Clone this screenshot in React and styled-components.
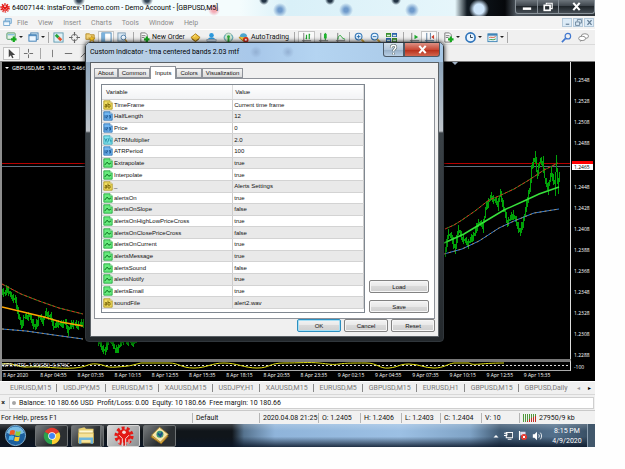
import React from "react";
import styled, { createGlobalStyle, css } from "styled-components";

const ui = 'Roboto, "Open Sans", sans-serif';
const classic = '"Liberation Sans", Arial, sans-serif';

const Global = createGlobalStyle`
  * { box-sizing: border-box; }
  html, body { margin: 0; background: #fefefe; }
  body { font: 7px/10px ${ui}; color: #111; }
  button { font: inherit; color: inherit; margin: 0; padding: 0; border: 0; background: none; }
  svg { display: block; flex: none; }
`;

const Page = styled.div`
  padding-right: 30px;
`;
const Desktop = styled.main`
  position: relative;
  background: #f0f0f0;
  overflow: hidden;
`;

/* ---------- title bar ---------- */
const TitleBar = styled.header`
  display: flex;
  align-items: center;
  gap: 2px;
  height: 16px;
  background:
    radial-gradient(circle at 79px 0, #345 0 2px, transparent 6px),
    radial-gradient(circle at 147px 0, #345 0 2px, transparent 6px),
    radial-gradient(circle at 214px 10px, #f3a9b4 0 2px, transparent 6px),
    radial-gradient(circle at 280px 10px, #6f9acb 0 2px, transparent 7px),
    radial-gradient(circle at 346px 10px, #6f9acb 0 2px, transparent 7px),
    radial-gradient(circle at 412px 10px, #6f9acb 0 2px, transparent 7px),
    radial-gradient(circle at 264px 0, #234 0 2px, transparent 5px),
    radial-gradient(circle at 330px 0, #234 0 2px, transparent 5px),
    radial-gradient(circle at 396px 0, #234 0 2px, transparent 5px),
    radial-gradient(circle at 479px 9px, #cfe6fb 0 5px, transparent 10px),
    linear-gradient(90deg, #f4fcfd 0 240px, #d9f0f8 290px, #e6f6fb 455px, #111a22 467px, #06080b 505px, #4c555d 516px, #2e3439);
  white-space: nowrap;
`;
const TitleText = styled.h1`
  flex: 1;
  margin: 0;
  font-size: 7px;
  line-height: 12px;
  font-weight: 400;
  color: #000;
`;
const Controls = styled.div`
  display: flex;
  align-self: flex-start;
  border: 1px solid #8a939a;
  border-top: 0;
  border-radius: 0 0 3px 3px;
  background: linear-gradient(#6d757c, #3a4148 50%, #20262b 50%, #454d54);
`;
const ControlButton = styled.button`
  display: grid;
  place-items: center;
  width: ${(p) => (p.$wide ? 36 : 21)}px;
  height: 13px;
  & + & { border-left: 1px solid #848c93; }
`;

/* ---------- menu and toolbars ---------- */
const MenuBar = styled.nav`
  display: flex;
  align-items: center;
  height: 13px;
  padding: 0 1px 0 3px;
  background: #f3f3f3;
`;
const MenuItem = styled.button`
  padding: 0 5px;
  color: #8b8b8b;
`;
const MdiButtons = styled.div`
  display: flex;
  gap: 1px;
  margin-left: auto;
`;
const MdiButton = styled.button`
  display: grid;
  place-items: center;
  width: 10px;
  height: 9px;
  border: 1px solid #b4c9da;
  background: #dcebf7;
`;
const Toolbar = styled.div`
  display: flex;
  align-items: center;
  height: ${(p) => (p.$last ? 17 : 15)}px;
  padding: 0 3px;
  border-top: 1px solid ${(p) => (p.$last ? "#dadada" : "#fff")};
  background: #f0f0f0;
`;
const Tool = styled.button`
  display: flex;
  align-items: center;
  justify-content: center;
  gap: 2px;
  flex: none;
  height: 13px;
  width: ${(p) => p.$w || 17}px;
  color: #111;
  white-space: nowrap;
  ${(p) => p.$pressed && css`background: #fafafa; border: 1px solid #c4c4c4;`}
`;
const Sep = styled.i`
  flex: none;
  width: 1px;
  height: 11px;
  margin: 0 ${(p) => (p.$tight ? 1 : 3)}px;
  background: #a8a8a8;
`;
const Caret = styled.i`
  border: 2px solid transparent;
  border-top-color: #222;
  border-bottom: 0;
`;
const Spacer = styled.span`
  flex: 1;
`;

/* ---------- chart ---------- */
const ChartWindow = styled.section`
  display: grid;
  grid-template-columns: minmax(0, 1fr) 24px;
  border-top: 1px solid #777;
  border-left: 2px solid #8e8e8e;
  background: #000;
  color: #fff;
  font: 5px/7px "Open Sans", sans-serif;
`;
const Plot = styled.div`
  display: grid;
  border-right: 1px solid #ddd;
`;
const PlotHead = styled.div`
  grid-area: 1 / 1;
  display: flex;
  align-items: center;
  align-self: start;
  gap: 3px;
  padding: 2px 3px;
  font-family: ${ui};
  font-size: 6px;
  white-space: pre;
  ${Caret} { border-top-color: #fff; }
`;
const Drawing = styled.svg`
  grid-area: 1 / 1;
  width: 100%;
  height: ${(p) => p.$h}px;
`;
const PriceAxis = styled.ol`
  display: flex;
  flex-direction: column;
  justify-content: space-between;
  margin: 0;
  padding: 15px 0 0;
  list-style: none;
`;
const Price = styled.li`
  padding-left: 3px;
  ${(p) => p.$live && css`
    margin-right: 2px;
    margin-left: 1px;
    padding-left: 2px;
    border-top: 3px solid #f00;
    line-height: 6px;
    background: #fff;
    color: #000;
  `}
`;
const SubPlot = styled(Plot)`
  border-top: 3px solid #777;
  border-bottom: 1px solid #aaa;
`;
const SubLabel = styled.span`
  grid-area: 1 / 1;
  white-space: nowrap;
`;
const SubAxis = styled.div`
  align-self: end;
  padding-left: 3px;
`;
const Times = styled.ol`
  grid-column: 1 / -1;
  display: grid;
  grid-template-columns: repeat(15, minmax(0, 1fr));
  height: 10px;
  margin: 0;
  padding: 0 34px 0 1px;
  list-style: none;
  white-space: nowrap;
`;
const Time = styled.li`
  line-height: 8px;
`;

/* ---------- bars below the chart ---------- */
const ChartTabs = styled.nav`
  display: flex;
  align-items: center;
  height: 13px;
  padding-left: 4px;
  border-top: 1px solid #fff;
  background: #f0f0f0;
`;
const ChartTab = styled.button`
  padding: 0 5px 0 6px;
  line-height: 8px;
  color: #777;
  border-right: 1px solid ${(p) => (p.$last ? "transparent" : "#888")};
`;
const TabScroll = styled.button`
  width: 11px;
  font-size: 6px;
  color: ${(p) => (p.$dim ? "#999" : "#000")};
`;
const Terminal = styled.div`
  display: flex;
  align-items: center;
  gap: 3px;
  height: 16px;
  border-top: 1px solid #d8d8d8;
`;
const TerminalClose = styled.button`
  width: 6px;
  font-weight: 700;
`;
const Balance = styled.div`
  display: flex;
  align-items: center;
  gap: 3px;
  flex: 1;
  height: 12px;
  margin-right: 1px;
  padding-left: 2px;
  border: 1px solid #cfcfcf;
  background: #fff;
  white-space: pre;
`;
const Dot = styled.i`
  width: 4px;
  height: 4px;
  border-radius: 50%;
  background: #a5a5a5;
`;
const StatusBar = styled.footer`
  display: grid;
  grid-template-columns: minmax(0, 192fr) 67fr 59fr 42fr 41fr 39fr 41fr 38fr 76fr;
  align-items: center;
  height: 14px;
  border-top: 1px solid #c9c9c9;
  background: #f1f1f1;
  white-space: nowrap;
`;
const Status = styled.span`
  display: flex;
  align-items: center;
  gap: 2px;
  padding-left: ${(p) => (p.$first ? 1 : 3)}px;
  border-left: ${(p) => (p.$first ? 0 : 1)}px solid #b5b5b5;
`;

/* ---------- taskbar ---------- */
const TaskBar = styled.footer`
  display: flex;
  align-items: center;
  height: 23px;
  padding-left: 4px;
  background:
    linear-gradient(rgba(255, 255, 255, 0.2), transparent 30%, transparent 55%, rgba(10, 22, 40, 0.85)),
    linear-gradient(90deg, #10151a 0 232px, #56738f 244px, #8fb4da 275px, #9cc0e4 400px, #7fa3c6 470px, #3f5972 500px, #53708c 555px, #33485c);
`;
const TaskButton = styled.button`
  display: grid;
  place-items: center;
  width: 33px;
  height: 22px;
  margin-left: 3px;
  border: 1px solid ${(p) => (p.$active ? "#d5d5d5" : "#6d7173")};
  ${(p) => p.$stacked && css`border-right: 4px double #6d7173;`}
  border-radius: 2px;
  background: ${(p) => (p.$active ? "linear-gradient(135deg, #d8d8d8, #8c8f91)" : "linear-gradient(135deg, #777b7d, #2b2f32 60%)")};
`;
const StartButton = styled.button`
  margin-right: 5px;
`;
const Tray = styled.div`
  display: flex;
  align-items: center;
  gap: 5px;
  margin-left: auto;
  color: #fff;
`;
const Clock = styled.time`
  width: 40px;
  text-align: center;
  line-height: 10px;
`;
const ShowDesktop = styled.button`
  width: 8px;
  height: 23px;
  border-left: 1px solid #8da0b1;
  background: #41576b;
`;

/* ---------- dialog ---------- */
const Dialog = styled.section`
  position: absolute;
  top: 42px;
  left: 85px;
  width: 359px;
  padding: 0 4px 4px;
  border: 1px solid #30363b;
  border-radius: 5px 5px 4px 4px;
  background: linear-gradient(#b9cee5, #8ea5bb 20px, #c0c5ca 88px, #3b4247 90px, #23282c);
  box-shadow: 0 0 5px #000;
`;
const DialogBar = styled.header`
  display: flex;
  align-items: flex-start;
  height: 19px;
  margin: 0 -4px;
  border-radius: 4px 4px 0 0;
  background:
    radial-gradient(circle at 170px 9px, #93b0d3, transparent 6px),
    radial-gradient(circle at 202px 9px, #93b0d3, transparent 6px),
    linear-gradient(90deg, #bdd0e2, #a8c8ea 170px, #b4d4f1 230px, #a7c7e5);
`;
const DialogTitle = styled.h2`
  flex: 1;
  margin: 0;
  padding-left: 4px;
  font-size: 7px;
  font-weight: 400;
  line-height: 19px;
  color: #000;
`;
const DialogControl = styled.button`
  display: grid;
  place-items: center;
  width: ${(p) => (p.$close ? 36 : 21)}px;
  height: 14px;
  margin-right: ${(p) => (p.$close ? 3 : 0)}px;
  border: 1px solid #4c5a68;
  border-top: 0;
  border-radius: ${(p) => (p.$close ? "0 0 3px 0" : "0 0 0 3px")};
  background: ${(p) => (p.$close ? "linear-gradient(#dd9184, #c84a37 50%, #b52a16 50%, #d2664f)" : "linear-gradient(#d3e0eb, #b3c6d9 50%, #94acc4 50%, #b9d0e5)")};
`;
const Client = styled.div`
  padding: 3px 3px 4px;
  border: 1px solid #5b6166;
  background: #f0f0f0;
  font-family: ${classic};
  font-size: 6px;
  line-height: 8px;
`;
const Tabs = styled.div`
  display: flex;
  align-items: flex-end;
  height: 12px;
`;
const Tab = styled.button`
  height: ${(p) => (p.$on ? 13 : 10)}px;
  margin-bottom: ${(p) => (p.$on ? -1 : 0)}px;
  padding: 0 ${(p) => (p.$on ? 4 : 3)}px;
  border: 1px solid #8e9299;
  border-bottom-width: ${(p) => (p.$on ? 0 : 1)}px;
  background: ${(p) => (p.$on ? "#fff" : "linear-gradient(#f4f4f4, #dcdcdc)")};
  & + & { border-left-width: ${(p) => (p.$on ? 1 : 0)}px; }
`;
const Sheet = styled.div`
  display: flex;
  align-items: flex-end;
  gap: 4px;
  padding: 5px 5px 5px 6px;
  border: 1px solid #8e9299;
  background: #fff;
`;
const TableFrame = styled.div`
  flex: 1;
  height: 229px;
  border: 1px solid #7f8790;
`;
const Grid = styled.table`
  width: 100%;
  height: 224px;
  border-collapse: collapse;
  table-layout: fixed;
  text-align: left;
`;
const HeadCell = styled.th`
  height: 14px;
  padding: 0 ${(p) => (p.$value ? 2 : 4)}px;
  border-right: 1px solid #dcdcdc;
  border-bottom: 1px solid #d2d2d2;
  font-weight: 400;
  background: linear-gradient(#fff, #f2f3f5);
`;
const Row = styled.tr`
  background: ${(p) => (p.$odd ? "#e9e9e9" : "#fff")};
`;
const Cell = styled.td`
  padding: 0 1px;
  border-right: 1px solid #cdcdcd;
  border-bottom: 1px solid #d3d3d3;
  line-height: 8px;
`;
const NameBox = styled.span`
  display: flex;
  align-items: center;
  gap: 1px;
`;
const SideButtons = styled.div`
  display: grid;
  gap: 7px;
`;
const Push = styled.button`
  width: ${(p) => (p.$wide ? 60 : 44)}px;
  height: 13px;
  border: 1px solid ${(p) => (p.$default ? "#2c8fc0" : "#828282")};
  border-radius: 2px;
  box-shadow: inset 0 0 0 1px ${(p) => (p.$default ? "#a5dff5" : "#f6f6f6")};
  background: linear-gradient(#f3f3f3, #e8e8e8 50%, #d9d9d9 50%, #cfcfcf);
  line-height: 10px;
`;
const Actions = styled.div`
  display: flex;
  justify-content: flex-end;
  gap: 3px;
`;

/* ---------- drawings ---------- */
const Icon = ({ size = 11, children }) => (
  <svg width={size} height={size} viewBox="0 0 12 12" fill="none" aria-hidden="true">{children}</svg>
);
const Plus = () => <path d="M8.500 5v6M5.500 8h6" stroke="#16a81e" strokeWidth="2.400" />;
const icons = {
  chartAdd: <><rect x="1" y="1" width="9" height="7" rx="1" fill="#e7f2e8" stroke="#4b9560" /><path d="M2 3h7" stroke="#5aa6d8" /><Plus /></>,
  windows: <><rect x="3" y="1" width="8" height="7" fill="#d4e8f7" stroke="#4c82ae" /><rect x="1" y="3" width="8" height="7" fill="#ecf6ff" stroke="#397bb4" /><path d="M1 4h8" stroke="#397bb4" /></>,
  market: <><rect x="1" y="1" width="10" height="10" fill="#dff0f5" stroke="#5d9ab0" /><path d="M3 3l3 3" stroke="#25a63a" strokeWidth="3" /><path d="M6 6l3 3" stroke="#e2532c" strokeWidth="3" /></>,
  target: <><circle cx="6" cy="6" r="3.500" stroke="#777" /><path d="M6 0v4M6 8v4M0 6h4M8 6h4" stroke="#666" strokeWidth="1.300" /></>,
  star: <><path d="M1 2h4l1 1h4v5H1z" fill="#f1d27b" stroke="#b58b28" /><path d="M7.500 4l1 2.500h2.500l-2 1.600.8 2.700-2.300-1.600L5.200 10.800 6 8.100 4 6.500h2.500z" fill="#ffcc28" stroke="#bb8914" strokeWidth=".6" /></>,
  panel: <><rect x="1" y="1" width="10" height="10" fill="#fff" stroke="#3f82b7" /><rect x="1" y="1" width="3.500" height="10" fill="#7cb2dd" /></>,
  tester: <><rect x="1" y="1" width="8" height="9" fill="#d9e8f4" stroke="#7f9cb4" /><circle cx="7" cy="6" r="2.600" fill="#eef7ff" stroke="#4c7ba5" /><path d="M9 8l2 3" stroke="#c2912d" strokeWidth="1.500" /></>,
  order: <><path d="M2 1h5l2 2v8H2z" fill="#f8f8f8" stroke="#777" /><path d="M3 4h4M3 6h3" stroke="#777" /><Plus /></>,
  editor: <><path d="M1 6l5-4 5 4-5 4z" fill="#f2c53e" stroke="#a97712" /><path d="M2 7.500l4 3 4-3" stroke="#8c6212" /><path d="M4 5l2-1.500" stroke="#fff3b4" /></>,
  person: <><circle cx="6" cy="3.500" r="2.500" fill="#2d99dc" /><path d="M2 8c1-3 7-3 8 0z" fill="#2d99dc" /><rect x="1" y="8" width="10" height="2.500" fill="#d5e0ea" stroke="#71899f" strokeWidth=".6" /></>,
  signal: <><circle cx="6" cy="6" r="4.800" fill="#d1e6d1" stroke="#8db2a6" /><path d="M3 3c-2 2-2 4 0 6M9 3c2 2 2 4 0 6" stroke="#57a7c5" /><path d="M6 5v6" stroke="#2ca538" strokeWidth="2" /><circle cx="6" cy="5" r="1.500" fill="#2ca538" /></>,
  robot: <><path d="M1 6l5 4 4-4-4-2z" fill="#f4c738" stroke="#b98912" /><path d="M2 5c0-5 8-5 8 0-2 1-6 1-8 0z" fill="#4ea6cf" /><circle cx="8.500" cy="8.500" r="3" fill="#dc2e1e" /><rect x="7.500" y="7.500" width="2" height="2" fill="#fff" /></>,
  bars: <><path d="M3 1v10M1 9.500h10" stroke="#777" /><path d="M6 3v5M6 7h-1M9 2v6M9 3h1" stroke="#19a52a" strokeWidth="1.300" /></>,
  candles: <><path d="M3 1v10M1 9.500h10" stroke="#777" /><path d="M8 1v8" stroke="#148d22" /><rect x="6.500" y="2" width="3" height="5" fill="#1db32d" /></>,
  line: <><path d="M3 1v10M1 9.500h10" stroke="#777" /><path d="M3 8c1-5 3-5 4-3s2 2 4 3" stroke="#1da52d" /></>,
  zoomIn: <><circle cx="5" cy="5" r="3.700" fill="#e6f4ff" stroke="#3778b7" strokeWidth="1.200" /><path d="M3 5h4M5 3v4" stroke="#2870b2" /><path d="M8 8l3 3" stroke="#caa032" strokeWidth="2" /></>,
  zoomOut: <><circle cx="5" cy="5" r="3.700" fill="#e6f4ff" stroke="#3778b7" strokeWidth="1.200" /><path d="M3 5h4" stroke="#2870b2" /><path d="M8 8l3 3" stroke="#caa032" strokeWidth="2" /></>,
  tiles: <><path d="M0 1h5.500v4.500H0zM6.500 6.500H12V11H6.500z" fill="#3a8f2e" /><path d="M6.500 1H12v4.500H6.500zM0 6.500h5.500V11H0z" fill="#2a63ad" /><path d="M1 3h3.500v1.500H1zM7.500 3H11v1.500H7.500zM1 8.500h3.500V10H1zM7.500 8.500H11V10H7.500z" fill="#dcefe0" /></>,
  scroll: <><path d="M3 1v10M1 9.500h10" stroke="#777" /><path d="M6 3l4 2.500L6 8z" fill="#1cab2c" /></>,
  shift: <><path d="M3 1v10M1 9.500h10M7 1v7" stroke="#55799c" /><path d="M11 3v5L8 5.500z" fill="#d2402a" /></>,
  clock: <><circle cx="6" cy="6" r="5" fill="#eaf5ff" stroke="#2f74ba" strokeWidth="1.800" /><path d="M6 3v3h2.500" stroke="#234" /></>,
  template: <><rect x="1" y="2" width="10" height="8.500" fill="#e9f4fb" stroke="#3f84b6" /><path d="M1 3h10" stroke="#3f84b6" strokeWidth="2" /><path d="M2.500 6c2-1 4 1 7-1" stroke="#d4522e" /><path d="M2.500 8.500c2-1 4 1 7-1" stroke="#2b9b3a" /></>,
  search: <><circle cx="7.500" cy="4.500" r="3" stroke="#4077cf" strokeWidth="1.300" /><path d="M5 7l-4 4" stroke="#4077cf" strokeWidth="1.800" /></>,
  chat: <><ellipse cx="7.500" cy="4.500" rx="4" ry="2.600" fill="#fff" stroke="#888" /><ellipse cx="4.500" cy="7" rx="3.800" ry="2.400" fill="#fff" stroke="#888" /><path d="M3 9l-1 2 3-2" fill="#888" /></>,
  cursor: <path d="M3 1v9l2.300-2 1.400 3.300 1.500-.7L6.900 7.500H10z" fill="#444" />,
  cross: <path d="M6 1v4M6 7v4M1 6h4M7 6h4" stroke="#666" />,
  vline: <path d="M6 2v8" stroke="#777" />,
  hline: <path d="M2 6h8" stroke="#666" />,
  trend: <path d="M2 10l8-8" stroke="#666" />,
  mdi: <><rect x="3" y="1" width="8" height="6" fill="#cfe5f6" stroke="#5c98c6" /><rect x="1" y="4" width="8" height="6" fill="#eef8ff" stroke="#5c98c6" /><path d="M1 5h8" stroke="#5c98c6" /></>,
};

const Gear = ({ size }) => (
  <svg width={size} height={size} viewBox="0 0 24 24" fill="none" aria-hidden="true">
    <circle cx="12" cy="12" r="8" fill="#e31a16" />
    <circle cx="12" cy="12" r="9" stroke="#e31a16" strokeWidth="5" strokeDasharray="3.300 2.350" />
    <path d="M10 24v-9L6 11M14 24v-9l4-4M6 21v-5M18 21v-5" stroke="#f3dcda" strokeWidth="1.200" />
    <circle cx="12" cy="7.500" r="2.200" fill="#f3dcda" />
  </svg>
);

const kinds = {
  text: { fill: "#f1de62", line: "#aa921c", mark: <path d="M2.500 5.500h2v3h-2v-1.500h2M6 3v5.500h2.500v-3H6" stroke="#6e5a00" /> },
  int: { fill: "#72b6f1", line: "#2c70ad", mark: <path d="M2.500 5v4M4 5.500h1.500v1.500H4v1.500h1.500M7 5.500h2v3H7M7 7h2" stroke="#164f8c" /> },
  real: { fill: "#80e3ee", line: "#36a3b5", mark: <path d="M2 4l1.500 3L5 4M3.500 7v2M7.500 3.500L5.500 9M8 6h1.500v3" stroke="#16829a" /> },
  bool: { fill: "#66ea7c", line: "#22a23c", mark: <path d="M2 8.500l3-3.500 2 2.500 2.500-1.500" stroke="#0b6f20" strokeWidth="1.200" /> },
};
const KindIcon = ({ kind }) => {
  const k = kinds[kind];
  return (
    <Icon size={10}>
      <path d="M1 1h7.500L11 3.500V11H1z" fill={k.fill} stroke={k.line} />
      <path d="M8.500 1v2.500H11" fill="#fff" stroke={k.line} strokeWidth=".7" />
      {k.mark}
    </Icon>
  );
};
const Cross = ({ size = 9, color = "#fff" }) => (
  <Icon size={size}><path d="M2.500 2l7 8M9.500 2l-7 8" stroke={color} strokeWidth="2.300" /></Icon>
);

const leftTrack = [[3,290],[6,293],[8,288],[12,296],[16,299],[19,312],[22,325],[25,317],[30,315],[33,321],[36,327],[40,317],[44,320],[47,312],[52,317],[55,326],[58,323],[62,324],[66,322],[69,330],[73,323],[78,325],[85,322]];
const lowerTrack = [[99,340],[102,346],[106,351],[109,340],[114,342],[116,350],[120,346],[123,339],[129,341],[135,342],[138,338]];
const rightTrack = [[446,252],[449,233],[453,238],[456,249],[459,229],[463,238],[466,240],[469,243],[473,237],[476,232],[479,222],[484,225],[487,206],[492,196],[496,200],[499,203],[501,193],[504,205],[508,222],[511,218],[514,214],[518,224],[521,232],[525,217],[528,200],[531,185],[533,164],[536,157],[538,173],[541,160],[544,163],[546,181],[549,187],[552,172],[556,184],[557,164],[559,185],[561,168]];
const barsFor = (track) => {
  let d = "";
  for (let i = 0; i < track.length - 1; i += 1) {
    const [x0, y0] = track[i];
    const [x1, y1] = track[i + 1];
    for (let x = x0; x < x1; x += 1) {
      const y = y0 + ((y1 - y0) * (x - x0)) / (x1 - x0);
      const slope = Math.abs(y1 - y0) / (x1 - x0) / 2;
      const up = slope + ((x * 7) % 5);
      const down = 1 + slope + ((x * 11) % 5);
      d += `M${x + 0.5} ${Math.round(y - up)}V${Math.round(y + down)}`;
    }
  }
  return d;
};

const Bands = () => (
  <Drawing $h={297} viewBox="3 62 568 297" preserveAspectRatio="none" fill="none" aria-label="GBPUSD price chart">
    <path d="M3 163.500H571" stroke="#b50000" />
    <path d="M3 166.500H571" stroke="#61707f" />
    <path d={barsFor(leftTrack) + barsFor(lowerTrack) + barsFor(rightTrack)} stroke="#00a208" />
    <g strokeWidth="1">
      <path d="M3 284L22 294 40 301 60 308 84 314M446 229L455 225 463 220 476 211 490 200 500 196 515 189 530 180 545 170 559 163" stroke="#1b8a1b" />
      <path d="M3 284L22 294 40 301 60 308 84 314M446 229L455 225 463 220 476 211 490 200 500 196 515 189 530 180 545 170 559 163" stroke="#e2231d" strokeDasharray="3 2" />
      <path d="M3 329L27 331 55 335 84 339M445 254L463 249 480 241 500 228 515 221 535 213 560 209" stroke="#2c7ee0" />
      <path d="M3 329L27 331 55 335 84 339M445 254L463 249 480 241 500 228 515 221 535 213 560 209" stroke="#c08a3a" strokeDasharray="2 3" />
    </g>
    <path d="M3 307L20 311 45 317 62 322 84 326" stroke="#ffa500" strokeWidth="1.500" />
    <path d="M445 243L465 234 485 222 505 210 525 201 540 194 560 187" stroke="#38e03c" strokeWidth="1.500" />
    <path d="M453 62h6l-3 3z" fill="#9fb0c4" />
  </Drawing>
);
const Oscillator = () => (
  <Drawing $h={8} viewBox="3 361 568 8" preserveAspectRatio="none" fill="none" aria-label="Oscillator">
    <path d="M3 364.500H571" stroke="#ddd" strokeDasharray="2 2" />
    <path d="M3 363C15 361 18 367 30 366S60 368 75 367 88 362 98 363 105 367 118 366 130 365 142 362H170C180 362 182 367 195 367S212 362 225 362 245 367 258 367 270 362 285 362 310 361 320 362 333 364 340 363 355 362 367 362 380 368 390 367 400 363 410 363 425 367 435 367 448 363 455 362H470C475 365 480 362 505 362 512 367 520 367S530 362 545 362 552 365 559 366" stroke="#e0dc10" />
  </Drawing>
);

const inputs = [
  ["TimeFrame", "Current time frame", "text"],
  ["HalfLength", "12", "int"],
  ["Price", "0", "int"],
  ["ATRMultiplier", "2.0", "real"],
  ["ATRPeriod", "100", "int"],
  ["Extrapolate", "true", "bool"],
  ["Interpolate", "true", "bool"],
  ["_", "Alerts Settings", "text"],
  ["alertsOn", "true", "bool"],
  ["alertsOnSlope", "false", "bool"],
  ["alertsOnHighLowPriceCross", "true", "bool"],
  ["alertsOnClosePriceCross", "false", "bool"],
  ["alertsOnCurrent", "true", "bool"],
  ["alertsMessage", "true", "bool"],
  ["alertsSound", "false", "bool"],
  ["alertsNotify", "true", "bool"],
  ["alertsEmail", "true", "bool"],
  ["soundFile", "alert2.wav", "text"],
];
const prices = ["1.2548", "1.2528", "1.2508", "1.2488", "1.2465", "1.2448", "1.2428", "1.2408", "1.2388", "1.2368", "1.2348", "1.2328", "1.2308", "1.2288"];
const times = ["8 Apr 2020", "8 Apr 04:55", "8 Apr 07:35", "8 Apr 10:15", "8 Apr 12:55", "8 Apr 15:35", "8 Apr 18:15", "8 Apr 20:55", "8 Apr 23:35", "9 Apr 02:15", "9 Apr 04:55", "9 Apr 07:35", "9 Apr 10:15", "9 Apr 12:55", "9 Apr 15:35"];
const charts = ["EURUSD,M15", "USDJPY,M5", "EURUSD,M15", "XAUUSD,M15", "USDJPY,H1", "XAUUSD,M15", "EURUSD,M5", "GBPUSD,M15", "EURUSD,H1", "GBPUSD,M15", "GBPUSD,Daily"];

const ToolIcon = ({ name, label, drop, ...rest }) => (
  <Tool aria-label={label ? undefined : name} $w={drop ? 22 : undefined} {...rest}>
    <Icon>{icons[name]}</Icon>
    {label}
    {drop && <Caret />}
  </Tool>
);

function IndicatorDialog() {
  return (
    <Dialog role="dialog" aria-labelledby="dialog-title">
      <DialogBar>
        <DialogTitle id="dialog-title">Custom Indicator - tma centered bands 2.03 mtf</DialogTitle>
        <DialogControl aria-label="Help">
          <Icon size={11}><path d="M3.500 4c0-3.500 5-3.500 5-.5C8.500 5.500 6 5.500 6 8M6 9.500v2" stroke="#566" strokeWidth="3" /><path d="M3.500 4c0-3.500 5-3.500 5-.5C8.500 5.500 6 5.500 6 8M6 9.500v2" stroke="#fff" strokeWidth="1.700" /></Icon>
        </DialogControl>
        <DialogControl $close aria-label="Close"><Cross size={11} /></DialogControl>
      </DialogBar>
      <Client>
        <Tabs role="tablist">
          {["About", "Common", "Inputs", "Colors", "Visualization"].map((t) => (
            <Tab key={t} role="tab" aria-selected={t === "Inputs"} $on={t === "Inputs"}>{t}</Tab>
          ))}
        </Tabs>
        <Sheet>
          <TableFrame>
            <Grid>
              <thead>
                <tr><HeadCell>Variable</HeadCell><HeadCell $value>Value</HeadCell></tr>
              </thead>
              <tbody>
                {inputs.map(([name, value, kind], i) => (
                  <Row key={name} $odd={i % 2 === 1}>
                    <Cell><NameBox><KindIcon kind={kind} />{name}</NameBox></Cell>
                    <Cell>{value}</Cell>
                  </Row>
                ))}
              </tbody>
            </Grid>
          </TableFrame>
          <SideButtons>
            <Push $wide>Load</Push>
            <Push $wide>Save</Push>
          </SideButtons>
        </Sheet>
        <Actions>
          <Push $default>OK</Push>
          <Push>Cancel</Push>
          <Push>Reset</Push>
        </Actions>
      </Client>
    </Dialog>
  );
}

export default function App() {
  return (
    <Page>
      <Global />
      <Desktop>
        <TitleBar>
          <Gear size={10} />
          <TitleText>64007144: InstaForex-1Demo.com - Demo Account - [GBPUSD,M5]</TitleText>
          <Controls>
            <ControlButton aria-label="Minimize"><Icon size={10}><path d="M1 8h10" stroke="#fff" strokeWidth="3" /></Icon></ControlButton>
            <ControlButton aria-label="Restore"><Icon size={10}><path d="M4 3V1.500h7V8H9" stroke="#fff" strokeWidth="1.400" /><rect x="1.500" y="4" width="7" height="6" stroke="#fff" strokeWidth="2" /></Icon></ControlButton>
            <ControlButton $wide aria-label="Close"><Cross size={11} /></ControlButton>
          </Controls>
        </TitleBar>
        <MenuBar>
          <Icon size={9}>{icons.mdi}</Icon>
          {["File", "View", "Insert", "Charts", "Tools", "Window", "Help"].map((m) => <MenuItem key={m}>{m}</MenuItem>)}
          <MdiButtons>
            <MdiButton aria-label="Minimize chart"><Icon size={7}><path d="M3 9h6" stroke="#667f96" strokeWidth="2" /></Icon></MdiButton>
            <MdiButton aria-label="Restore chart"><Icon size={7}><path d="M4 4V1h7v6H8M1 5h7v6H1z" stroke="#667f96" strokeWidth="1.500" /></Icon></MdiButton>
            <MdiButton aria-label="Close chart"><Cross size={7} color="#667f96" /></MdiButton>
          </MdiButtons>
        </MenuBar>
        <Toolbar>
          <ToolIcon name="chartAdd" drop />
          <ToolIcon name="windows" drop />
          <Sep $tight />
          <ToolIcon name="market" $w={16} />
          <ToolIcon name="target" $w={16} />
          <ToolIcon name="star" $w={16} />
          <ToolIcon name="panel" $w={16} $pressed />
          <ToolIcon name="tester" $w={16} />
          <Sep />
          <ToolIcon name="order" label="New Order" $w={50} />
          <ToolIcon name="editor" $w={16} />
          <ToolIcon name="person" />
          <ToolIcon name="signal" $w={16} />
          <ToolIcon name="robot" label="AutoTrading" $w={55} />
          <Sep />
          <ToolIcon name="bars" $pressed />
          <ToolIcon name="candles" />
          <ToolIcon name="line" $w={16} />
          <Sep $tight />
          <ToolIcon name="zoomIn" $w={16} />
          <ToolIcon name="zoomOut" $w={16} />
          <ToolIcon name="tiles" />
          <Sep />
          <ToolIcon name="scroll" $w={14} />
          <ToolIcon name="shift" $pressed $w={16} />
          <Sep $tight />
          <ToolIcon name="order" drop />
          <ToolIcon name="clock" drop />
          <ToolIcon name="template" drop />
          <Sep $tight />
          <Spacer />
          <ToolIcon name="search" />
          <ToolIcon name="chat" />
        </Toolbar>
        <Toolbar $last>
          <ToolIcon name="cursor" $pressed />
          <ToolIcon name="cross" />
          <Sep />
          <ToolIcon name="vline" $w={16} />
          <ToolIcon name="hline" $w={16} />
          <ToolIcon name="trend" $w={16} />
        </Toolbar>
        <ChartWindow>
          <Plot>
            <Bands />
            <PlotHead><Caret />GBPUSD,M5  1.2455 1.2466 1.2455 1.2465</PlotHead>
          </Plot>
          <PriceAxis>
            {prices.map((p) => <Price key={p} $live={p === "1.2465"}>{p}</Price>)}
          </PriceAxis>
          <SubPlot>
            <Oscillator />
            <SubLabel>WPR-HTFS -1.00(CBI) -0.67%C</SubLabel>
          </SubPlot>
          <SubAxis>-100</SubAxis>
          <Times>
            {times.map((t) => <Time key={t}>{t}</Time>)}
          </Times>
        </ChartWindow>
        <ChartTabs>
          {charts.map((c, i) => <ChartTab key={i} $last={i === charts.length - 1}>{c}</ChartTab>)}
          <Spacer />
          <TabScroll $dim aria-label="Scroll left">◂</TabScroll>
          <TabScroll aria-label="Scroll right">▸</TabScroll>
        </ChartTabs>
        <Terminal>
          <TerminalClose aria-label="Close terminal">×</TerminalClose>
          <Balance><Dot />Balance: 10 180.66 USD  Profit/Loss: 0.00  Equity: 10 180.66  Free margin: 10 180.66</Balance>
        </Terminal>
        <StatusBar>
          <Status $first>For Help, press F1</Status>
          <Status>Default</Status>
          <Status>2020.04.08 21:25</Status>
          <Status>O: 1.2405</Status>
          <Status>H: 1.2406</Status>
          <Status>L: 1.2403</Status>
          <Status>C: 1.2404</Status>
          <Status>V: 10</Status>
          <Status>
            <svg width="14" height="8" viewBox="0 0 14 8" aria-hidden="true">
              <path d="M.5 0v8M2.500 0v8M4.500 0v7M6.500 0v5M8.500 0v4M10.500 0v3M12.500 0v2" stroke="#4f9a3b" />
              <path d="M4.500 7v1M6.500 5v3M8.500 4v4M10.500 3v5M12.500 2v6" stroke="#c22b22" />
            </svg>
            27950/9 kb
          </Status>
        </StatusBar>
        <TaskBar>
          <StartButton aria-label="Start">
            <svg width="23" height="23" viewBox="0 0 24 24" aria-hidden="true">
              <circle cx="12" cy="12" r="10.500" fill="#1b5f9e" stroke="#8ab8d8" />
              <path d="M3 9a9.500 9.500 0 0 1 18 0c-5 3-13 3-18 0z" fill="#79bce4" />
              <path d="M6.500 7c2-1 3.500-.8 5 0l-.8 4.500c-1.500-.8-3-.8-5 0z" fill="#ee5a24" />
              <path d="M12.500 7.400c1.500.8 3 .8 5 0l-.9 4.500c-2 .8-3.500.6-5 0z" fill="#8fce3c" />
              <path d="M5.500 12.600c2-1 3.500-.8 5 0L9.700 17c-1.500-.8-3-.8-5 0z" fill="#4cb5f0" />
              <path d="M11.400 13c1.500.8 3 .8 5 0l-.9 4.500c-2 .8-3.500.6-5 0z" fill="#fbc92d" />
            </svg>
          </StartButton>
          <TaskButton aria-label="Chrome">
            <svg width="18" height="18" viewBox="0 0 24 24" aria-hidden="true">
              <path d="M12 12L2.500 6.500A11 11 0 0 1 21.500 6.500z" fill="#e33b2e" />
              <path d="M12 12L21.500 6.500A11 11 0 0 1 12 23z" fill="#fccd30" />
              <path d="M12 12L12 23A11 11 0 0 1 2.500 6.500z" fill="#2ba24c" />
              <circle cx="12" cy="12" r="5" fill="#fff" /><circle cx="12" cy="12" r="4" fill="#4285f4" />
            </svg>
          </TaskButton>
          <TaskButton $stacked aria-label="Explorer">
            <svg width="20" height="19" viewBox="0 0 24 22" aria-hidden="true">
              <path d="M3 3l7-2 2 2h9v15H3z" fill="#e8cf72" /><path d="M4 5h16v5H4z" fill="#fff8d2" />
              <path d="M3 8h18v12H3z" fill="#f6e39a" stroke="#c7a748" />
              <path d="M5 21v-6h14v6M8 15h8" fill="none" stroke="#6fb7dd" strokeWidth="3" />
            </svg>
          </TaskButton>
          <TaskButton $active aria-label="InstaForex"><Gear size={20} /></TaskButton>
          <TaskButton aria-label="MetaEditor">
            <svg width="21" height="20" viewBox="0 0 24 22" aria-hidden="true">
              <path d="M2 12L11 3l11 8-8 9z" fill="#d9a93b" stroke="#7d5a18" />
              <path d="M3 10L12 1l10 8-9 9z" fill="#f8e6a9" stroke="#a98634" />
              <circle cx="12.500" cy="9" r="4" fill="#3c9a78" /><path d="M10 8l3 3 2-4" stroke="#1d4c8b" strokeWidth="2" fill="none" />
            </svg>
          </TaskButton>
          <Tray>
            <Icon size={6}><path d="M1 9l5-5 5 5z" fill="#fff" /></Icon>
            <Icon size={9}><rect x="3" y="2" width="8.500" height="7" fill="#456" stroke="#fff" strokeWidth="1.300" /><path d="M5 11h5M0 3h4v3H0" stroke="#fff" strokeWidth="1.300" /></Icon>
            <Icon size={9}><path d="M2 0v12" stroke="#fff" strokeWidth="1.500" /><path d="M3 1h7v5H3z" fill="#dde" /><circle cx="8" cy="8" r="4" fill="#e2352c" /><path d="M6.500 6.500l3 3M9.500 6.500l-3 3" stroke="#fff" strokeWidth="1.300" /></Icon>
            <Icon size={10}><path d="M1 4h2l3-3v10L3 8H1z" fill="#fff" /><path d="M8 4c1 1 1 3 0 4M10 2c2 2 2 6 0 8" stroke="#fff" /></Icon>
            <Clock>8:15 PM<br />4/9/2020</Clock>
          </Tray>
          <ShowDesktop aria-label="Show desktop" />
        </TaskBar>
        <IndicatorDialog />
      </Desktop>
    </Page>
  );
}
